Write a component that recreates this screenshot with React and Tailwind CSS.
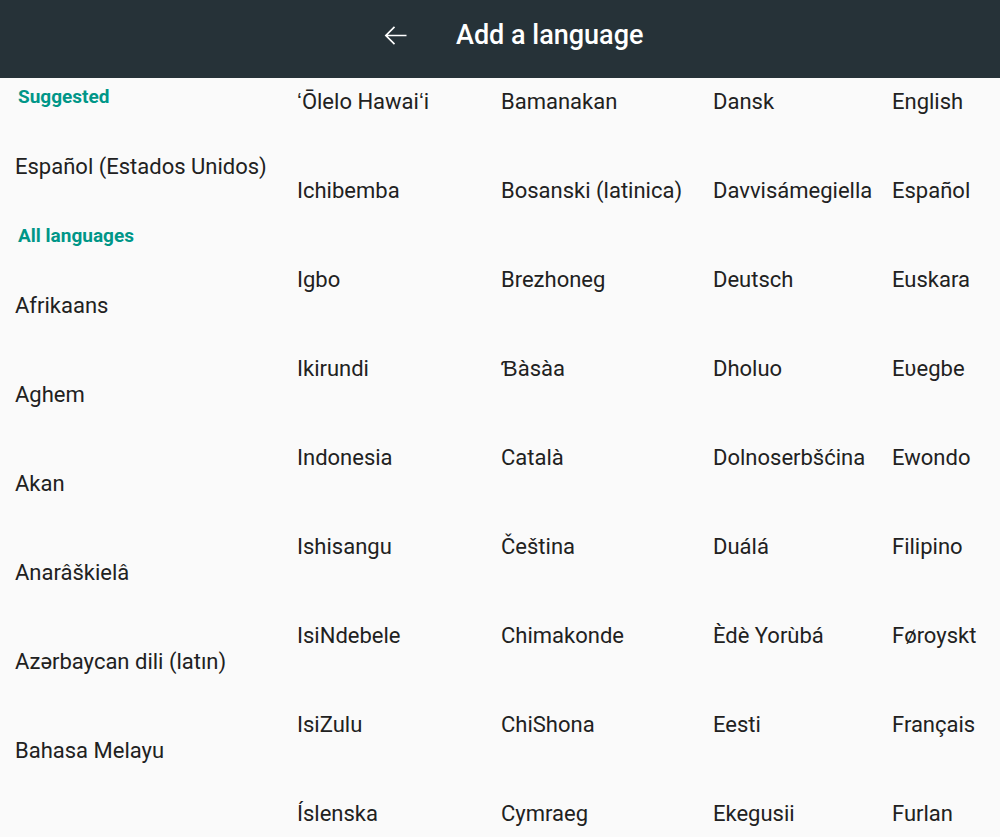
import React from "react";

const columns = [
  ["ʻŌlelo Hawaiʻi", "Ichibemba", "Igbo", "Ikirundi", "Indonesia", "Ishisangu", "IsiNdebele", "IsiZulu", "Íslenska"],
  ["Bamanakan", "Bosanski (latinica)", "Brezhoneg", "Ɓàsàa", "Català", "Čeština", "Chimakonde", "ChiShona", "Cymraeg"],
  ["Dansk", "Davvisámegiella", "Deutsch", "Dholuo", "Dolnoserbšćina", "Duálá", "Èdè Yorùbá", "Eesti", "Ekegusii"],
  ["English", "Español", "Euskara", "Eʋegbe", "Ewondo", "Filipino", "Føroyskt", "Français", "Furlan"],
];

const colWidths = ["w-[204px]", "w-[212px]", "w-[179px]", "flex-1"];

function ArrowLeft() {
  return (
    <svg width="33" height="33" viewBox="0 0 24 24" fill="white">
      <path d="M20 11.4H6.4l5.3-5.3-0.85-0.85L4.1 12l6.75 6.75 0.85-0.85-5.3-5.3H20z" />
    </svg>
  );
}

export default function App() {
  return (
    <div className="w-[1000px] h-[837px] overflow-hidden bg-[#fafafa] font-['Roboto',sans-serif] text-[#212121]">
      {/* Toolbar */}
      <div className="h-[78px] bg-[#263238] flex items-center pl-[379px] pb-[8px]">
        <ArrowLeft />
        <span className="ml-[44px] text-white text-[27px] font-medium">
          Add a language
        </span>
      </div>

      <div className="flex">
        {/* Suggested + first column of all languages */}
        <div className="w-[297px] pl-[15px] pt-[7px] flex flex-col text-[22px] leading-[24px] whitespace-nowrap">
          <div className="pl-[3px] text-[19px] font-bold text-[#009688]">Suggested</div>
          <div className="mt-[46px]">Español (Estados Unidos)</div>
          <div className="mt-[45px] pl-[3px] text-[19px] font-bold text-[#009688]">All languages</div>
          <div className="mt-[46px]">Afrikaans</div>
          <div className="mt-[65px]">Aghem</div>
          <div className="mt-[65px]">Akan</div>
          <div className="mt-[65px]">Anarâškielâ</div>
          <div className="mt-[65px]">Azərbaycan dili (latın)</div>
          <div className="mt-[65px]">Bahasa Melayu</div>
        </div>

        {columns.map((col, i) => (
          <div
            key={i}
            className={`${colWidths[i]} pt-[12px] flex flex-col gap-[65px] text-[22px] leading-[24px] whitespace-nowrap`}
          >
            {col.map((name) => (
              <div key={name}>{name}</div>
            ))}
          </div>
        ))}
      </div>
    </div>
  );
}
